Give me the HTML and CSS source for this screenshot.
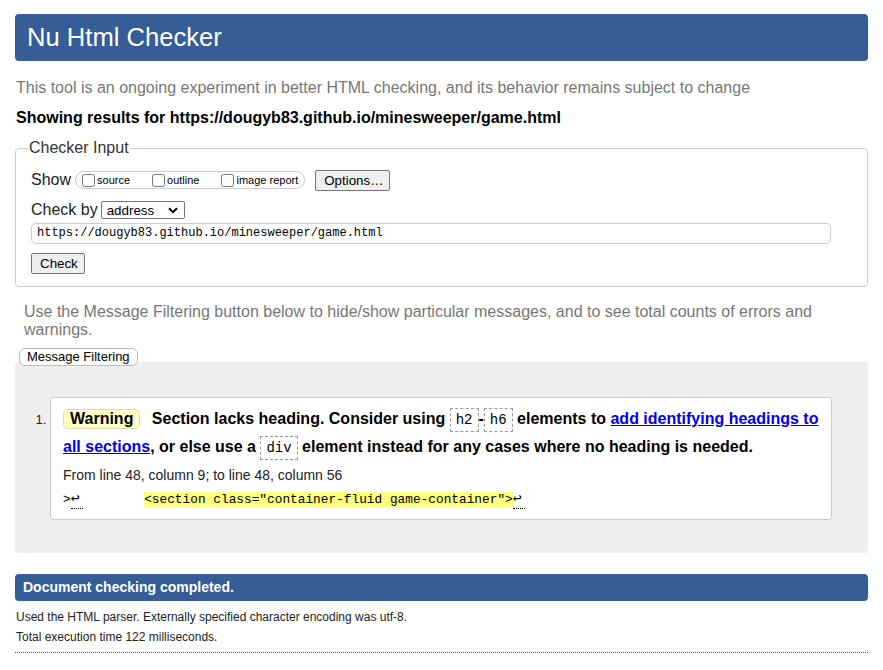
FILE: index.html
```html
<!DOCTYPE html>
<html lang="en">
<head>
<meta charset="utf-8">
<title>Nu Html Checker</title>
<link rel="stylesheet" href="styles.css">
</head>
<body>
<h1 class="title">Nu Html Checker</h1>
<p class="intro">This tool is an ongoing experiment in better HTML checking, and its behavior remains subject to change</p>
<p class="showing">Showing results for https://dougyb83.github.io/minesweeper/game.html</p>

<fieldset class="checker">
  <legend class="legend">Checker Input</legend>
  <div class="row show-row">
    <span class="label">Show</span>
    <span class="pill">
      <label class="opt"><input type="checkbox" class="cb"><span>source</span></label>
      <label class="opt"><input type="checkbox" class="cb"><span>outline</span></label>
      <label class="opt"><input type="checkbox" class="cb"><span>image report</span></label>
    </span>
    <button class="btn options">Options…</button>
  </div>
  <div class="row by-row">
    <span class="label">Check by</span>
    <span class="select">address<svg class="chev" width="10" height="7" viewBox="0 0 10 7"><path d="M1 1.2 L5 5.2 L9 1.2" fill="none" stroke="#000" stroke-width="2"/></svg></span>
  </div>
  <div class="url">https://dougyb83.github.io/minesweeper/game.html</div>
  <div class="check-row"><button class="btn check">Check</button></div>
</fieldset>

<p class="filter-text">Use the Message Filtering button below to hide/show particular messages, and to see total counts of errors and warnings.</p>
<div class="filter-row"><button class="filter-btn">Message Filtering</button></div>

<div class="results">
  <ol class="messages">
    <li class="msg">
      <p class="msg-text"><span class="badge">Warning</span> Section lacks heading. Consider using <code class="el">h2</code>-<code class="el">h6</code> elements to <a href="#" class="link">add identifying headings to all sections</a>, or else use a <code class="el">div</code> element instead for any cases where no heading is needed.</p>
      <p class="loc">From line 48, column 9; to line 48, column 56</p>
      <p class="extract">&gt;<span class="lf">↩</span>        <mark class="hl">&lt;section class="container-fluid game-container"&gt;</mark><span class="lf">↩</span></p>
    </li>
  </ol>
</div>

<div class="done">Document checking completed.</div>
<p class="info first">Used the HTML parser. Externally specified character encoding was utf-8.</p>
<p class="info last">Total execution time 122 milliseconds.</p>
</body>
</html>
```
FILE: styles.css
```css
* { box-sizing: border-box; }
body {
  margin: 0;
  padding: 14px 15px 0;
  font-family: "Liberation Sans", Arial, sans-serif;
  font-size: 16px;
  color: #000;
  background: #fff;
}
.title {
  margin: 0;
  height: 47px;
  line-height: 47px;
  padding-left: 12px;
  background: #365d95;
  color: #fff;
  font-size: 25.6px;
  font-weight: normal;
  border-radius: 4px;
}
.intro {
  margin: 18px 0 0;
  padding-left: 1px;
  line-height: 18px;
  color: #777;
}
.showing {
  margin: 12px 0 0;
  padding-left: 1px;
  line-height: 18px;
  font-weight: bold;
}
.checker {
  margin: 12px 0 0;
  padding: 2px 15px 12px;
  border: 1px solid #ccc;
  border-radius: 4px;
  min-inline-size: 0;
}
.legend {
  padding: 0 1px;
  margin-left: -3px;
  line-height: 18px;
  color: #333;
}
.row {
  display: flex;
  align-items: center;
  height: 22px;
}
.show-row { margin-top: 10px; }
.label { color: #222; line-height: 18px; }
.pill {
  display: flex;
  align-items: center;
  height: 18px;
  margin-left: 4px;
  padding: 0 6px 0 2px;
  border: 1px solid #ccc;
  border-radius: 9px;
  font-size: 11px;
}
.opt {
  display: flex;
  align-items: center;
  margin-right: 18px;
}
.opt:last-child { margin-right: 0; }
.cb {
  width: 13px;
  height: 13px;
  margin: 0 2px 0 4px;
}
.btn {
  font-family: "Liberation Sans", Arial, sans-serif;
  font-size: 13.33px;
  height: 21px;
  line-height: 17px;
  padding: 0 8px;
  background: #efefef;
  border: 1px solid #767676;
  border-radius: 2px;
  color: #000;
}
.options { margin-left: 10px; width: 75px; height: 21px; }
.by-row { margin-top: 8px; }
.select {
  display: inline-flex;
  align-items: center;
  justify-content: space-between;
  width: 84px;
  height: 18px;
  margin-left: 3px;
  padding: 0 6px 0 5px;
  border: 1px solid #767676;
  border-radius: 2px;
  font-size: 13.33px;
}
.url {
  margin-top: 2px;
  width: 800px;
  height: 21px;
  line-height: 19px;
  padding-left: 5px;
  border: 1px solid #ccc;
  border-radius: 5px;
  font-family: "Liberation Mono", "DejaVu Sans Mono", monospace;
  font-size: 12px;
}
.check-row { margin-top: 9px; display: flex; }
.check { width: 54px; }
.filter-text {
  margin: 16px 0 0;
  padding: 0 9px;
  line-height: 18px;
  color: #777;
}
.filter-row { margin-top: 9px; display: flex; padding-left: 4px; }
.filter-btn {
  position: relative;
  z-index: 1;
  height: 18px;
  line-height: 16px;
  padding: 0 7px;
  background: #fff;
  border: 1px solid #bbb;
  border-radius: 6px;
  font-family: "Liberation Sans", Arial, sans-serif;
  font-size: 13px;
  color: #000;
}
.results {
  margin-top: -4px;
  padding: 35px 36px 33px 35px;
  background: #efefef;
  border-radius: 3px;
}
.messages { margin: 0; padding: 0; list-style: decimal; }
.msg {
  background: #fff;
  border: 1px solid #ccc;
  border-radius: 3px;
  padding: 7px 12px 9px;
}
.msg::marker { font-size: 13px; color: #222; }
.msg-text {
  margin: 0;
  line-height: 28px;
  font-weight: bold;
}
.badge {
  display: inline-block;
  height: 20px;
  line-height: 18px;
  padding: 0 6px;
  margin-right: 7px;
  background: #ffffc8;
  border: 1px solid #dcdcb0;
  border-radius: 5px;
}
.el {
  display: inline-block;
  line-height: 22px;
  padding: 0 5px;
  border: 1px dashed #999;
  font-family: "Liberation Mono", "DejaVu Sans Mono", monospace;
  font-size: 14px;
  font-weight: normal;
}
.link { color: #0000ee; text-decoration: underline; }
.loc {
  margin: 4px 0 0;
  line-height: 20px;
  font-size: 14px;
  color: #222;
}
.extract {
  margin: 5px 0 0;
  line-height: 20px;
  white-space: pre;
  font-family: "Liberation Mono", "DejaVu Sans Mono", monospace;
  font-size: 12.8px;
}
.hl { background: #ffff80; color: #000; }
.lf { border-bottom: 1px dotted #000; font-size: 15px; padding-right: 3px; }
.done {
  margin-top: 21px;
  height: 27px;
  line-height: 27px;
  padding-left: 8px;
  background: #365d95;
  color: #fff;
  font-weight: bold;
  font-size: 14px;
  border-radius: 4px;
}
.info {
  margin: 0;
  padding-left: 1px;
  line-height: 20px;
  font-size: 12px;
  color: #222;
}
.first { margin-top: 6px; }
.last {
  padding-bottom: 5px;
  border-bottom: 1px dotted #555;
}
```
